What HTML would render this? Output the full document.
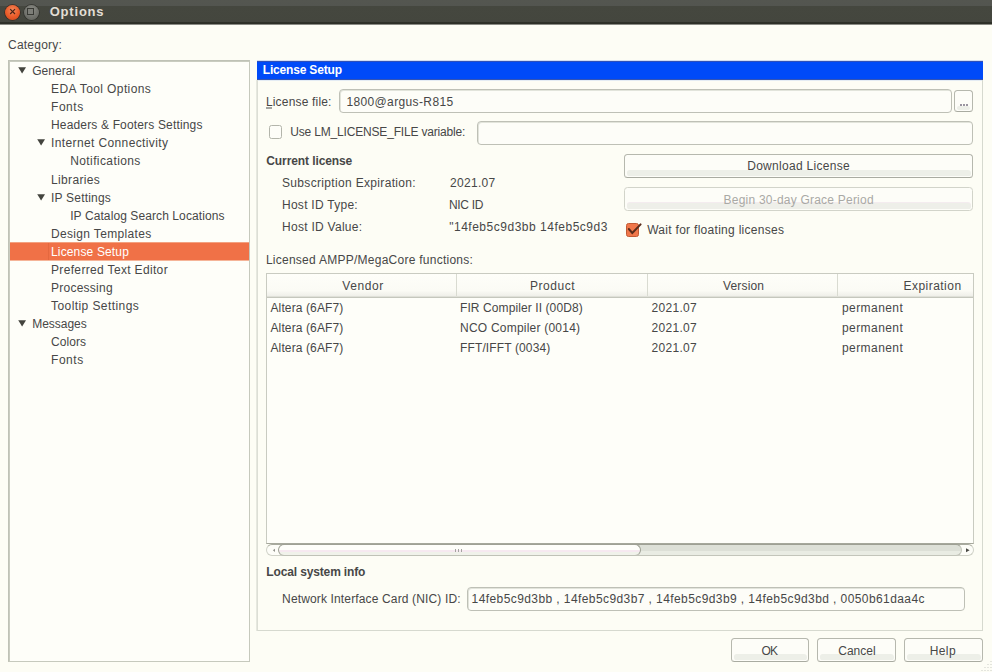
<!DOCTYPE html>
<html><head><meta charset="utf-8"><style>
*{box-sizing:border-box;margin:0;padding:0}
html,body{width:992px;height:672px;overflow:hidden;background:#fdfdf5}
body{position:relative;font-family:"Liberation Sans",sans-serif;font-size:12px;color:#474747}
.a{position:absolute}
.t{position:absolute;white-space:pre;line-height:14px;font-size:12px}
.input{position:absolute;border:1px solid #bec0b6;border-radius:4px;background:#fdfdf8;box-shadow:inset 1px 1px 0 #e2e4db}
.btn{position:absolute;border:1px solid #b6b8ae;border-bottom-color:#a9aba1;border-radius:3.5px;background:#fdfdf8}
.btn::after{content:'';position:absolute;left:2px;right:1px;bottom:1px;height:6px;border-radius:3px 4px 3px 3px;background:#edefe8}
.btn.dis{border-color:#d2d4ca}
.btn.dis::after{background:#eeefe9;box-shadow:0 -1px 0 #f4ecef}
.btn.sm::after{height:4px;left:2px;right:2px}
</style></head><body>
<div class="a" style="left:0;top:0;width:992px;height:24px;background:linear-gradient(#545650 0,#535550 6px,#45473f 6px,#44463e 22px,#2f3129 22px,#2d2f27 24px)"></div>
<div class="a" style="left:24px;top:24px;width:968px;height:1px;background:#8a8b84"></div>
<div class="a" style="left:0;top:24px;width:24px;height:1px;background:#8a8b84"></div>
<div class="a" style="left:5px;top:4.5px;width:15px;height:15px;border-radius:50%;background:radial-gradient(circle at 50% 35%,#f58a5c 0,#ea5a28 55%,#c8461c 100%);box-shadow:0 0 0 0.7px #3a2a22"></div>
<svg class="a" style="left:5px;top:4px" width="15" height="15"><path d="M5.2 5.2L10 10M10 5.2L5.2 10" stroke="#4a2418" stroke-width="1.2"/></svg>
<div class="a" style="left:23.5px;top:4.5px;width:15px;height:15px;border-radius:50%;background:radial-gradient(circle at 50% 35%,#8c8d87 0,#6f706a 60%,#5a5b55 100%);box-shadow:0 0 0 0.7px #30312c"></div>
<div class="a" style="left:27px;top:8px;width:7px;height:7px;border:1.3px solid #393a35;background:#7d7e78"></div>
<div class="t" style="left:49.70px;top:5px;letter-spacing:0.8px;font-weight:bold;font-size:13px;color:#e2ded5">Options</div>
<div class="t" style="left:8.00px;top:38px;letter-spacing:0.225px">Category:</div>
<div class="a" style="left:8px;top:60px;width:242px;height:602px;border:1px solid #c6c9bd;border-top-color:#bfc2b6;border-left-color:#bfc2b6;box-shadow:inset 1px 1px 0 #c9ccc0;background:#fefef9"></div>
<div class="a" style="left:10px;top:242px;width:239px;height:1px;background:#f3a180"></div>
<div class="a" style="left:10px;top:243px;width:239px;height:17px;background:#f07147"></div>
<div class="a" style="left:10px;top:260px;width:239px;height:1px;background:#f5b498"></div>
<div class="a" style="left:48px;top:243px;width:1px;height:17px;background:#e4683f"></div>
<div class="t" style="left:32.20px;top:64px;letter-spacing:0.033px">General</div>
<svg class="a" style="left:18px;top:67px" width="9" height="8"><path d="M0.2 0.3H8L4.1 6.6Z" fill="#43443e"/></svg>
<div class="t" style="left:51.00px;top:82px;letter-spacing:0.4px">EDA Tool Options</div>
<div class="t" style="left:51.00px;top:100px;letter-spacing:0.55px">Fonts</div>
<div class="t" style="left:51.00px;top:118px;letter-spacing:0.16px">Headers &amp; Footers Settings</div>
<div class="t" style="left:51.00px;top:136px;letter-spacing:0.38px">Internet Connectivity</div>
<svg class="a" style="left:37px;top:139px" width="9" height="8"><path d="M0.2 0.3H8L4.1 6.6Z" fill="#43443e"/></svg>
<div class="t" style="left:70.20px;top:154px;letter-spacing:0.4px">Notifications</div>
<div class="t" style="left:51.00px;top:173px;letter-spacing:0.35px">Libraries</div>
<div class="t" style="left:51.00px;top:191px;letter-spacing:0.2px">IP Settings</div>
<svg class="a" style="left:37px;top:194px" width="9" height="8"><path d="M0.2 0.3H8L4.1 6.6Z" fill="#43443e"/></svg>
<div class="t" style="left:70.20px;top:209px;letter-spacing:0.092px">IP Catalog Search Locations</div>
<div class="t" style="left:51.00px;top:227px;letter-spacing:0.333px">Design Templates</div>
<div class="t" style="left:51.00px;top:245px;letter-spacing:0.15px;color:#ffffff">License Setup</div>
<div class="t" style="left:51.00px;top:263px;letter-spacing:0.34px">Preferred Text Editor</div>
<div class="t" style="left:51.00px;top:281px;letter-spacing:0.244px">Processing</div>
<div class="t" style="left:51.00px;top:299px;letter-spacing:0.427px">Tooltip Settings</div>
<div class="t" style="left:32.20px;top:317px;letter-spacing:-0.029px">Messages</div>
<svg class="a" style="left:18px;top:320px" width="9" height="8"><path d="M0.2 0.3H8L4.1 6.6Z" fill="#43443e"/></svg>
<div class="t" style="left:51.00px;top:335px;letter-spacing:0.08px">Colors</div>
<div class="t" style="left:51.00px;top:353px;letter-spacing:0.55px">Fonts</div>
<div class="a" style="left:256px;top:80px;width:1px;height:551px;background:#e6e8df"></div>
<div class="a" style="left:257px;top:61px;width:726px;height:570px;border:1px solid #d6d9cf;border-left-color:#dcded5"></div>
<div class="a" style="left:257px;top:61px;width:726px;height:19px;background:#004af8"></div>
<div class="a" style="left:257px;top:61px;width:726px;height:1px;background:#3050b8"></div>
<div class="a" style="left:257px;top:79px;width:726px;height:1px;background:#3454b4"></div>
<div class="a" style="left:257px;top:60px;width:726px;height:1px;background:#d4dcf0"></div>
<div class="a" style="left:258px;top:80px;width:724px;height:1px;background:#e4ecf4"></div>
<div class="t" style="left:262.80px;top:63px;letter-spacing:-0.183px;font-weight:bold;color:#ffffff">License Setup</div>
<div class="t" style="left:265.90px;top:95px;letter-spacing:0.183px">License file:</div>
<div class="a" style="left:266px;top:107px;width:6px;height:2px;background:#a3a49e"></div>
<div class="input" style="left:339px;top:89px;width:613px;height:24px"></div>
<div class="t" style="left:346.40px;top:95px;letter-spacing:0.371px">1800@argus-R815</div>
<div class="btn sm" style="left:954px;top:90px;width:19px;height:22px"></div>
<div class="a" style="left:960px;top:104px;width:8px;height:2px;background:repeating-linear-gradient(90deg,#9a94a0 0,#9a94a0 2px,transparent 2px,transparent 3px)"></div>
<div class="a" style="left:269px;top:125px;width:13px;height:14px;border:1.5px solid #b3b5ab;border-radius:2.5px;background:#fdfdf8"></div>
<div class="t" style="left:290.30px;top:125px;letter-spacing:-0.179px">Use LM_LICENSE_FILE variable:</div>
<div class="input" style="left:477px;top:121px;width:496px;height:24px"></div>
<div class="t" style="left:266.30px;top:154px;letter-spacing:-0.1px;font-weight:bold">Current license</div>
<div class="t" style="left:282.00px;top:176px;letter-spacing:0.33px">Subscription Expiration:</div>
<div class="t" style="left:450.00px;top:176px;letter-spacing:0.3px">2021.07</div>
<div class="t" style="left:282.00px;top:198px;letter-spacing:0.267px">Host ID Type:</div>
<div class="t" style="left:449.00px;top:198px;letter-spacing:-0.32px">NIC ID</div>
<div class="t" style="left:282.00px;top:220px;letter-spacing:0.277px">Host ID Value:</div>
<div class="t" style="left:449.20px;top:220px;letter-spacing:0.513px">"14feb5c9d3bb 14feb5c9d3</div>
<div class="btn" style="left:624px;top:154px;width:349px;height:24px"></div>
<div class="t" style="left:747.20px;top:159px;letter-spacing:0.293px">Download License</div>
<div class="btn dis" style="left:624px;top:187px;width:349px;height:24px"></div>
<div class="t" style="left:723.60px;top:193px;letter-spacing:0.217px;color:#a9a9a5">Begin 30-day Grace Period</div>
<div class="a" style="left:626px;top:223px;width:13px;height:14px;border:1px solid #c25a34;border-radius:2.5px;background:#f0774a"></div>
<svg class="a" style="left:626px;top:222px" width="17" height="16"><path d="M2.8 7L6.3 11L14.6 2.4" stroke="#5a2c1b" stroke-width="2" fill="none" stroke-linecap="round"/></svg>
<div class="t" style="left:647.20px;top:223px;letter-spacing:0.288px">Wait for floating licenses</div>
<div class="t" style="left:265.90px;top:253px;letter-spacing:0.256px">Licensed AMPP/MegaCore functions:</div>
<div class="a" style="left:266px;top:273px;width:708px;height:271px;border:1px solid #c9cbc1;border-bottom-color:#a6a89c;background:#fefef9"></div>
<div class="a" style="left:267px;top:274px;width:706px;height:22px;background:linear-gradient(#fefef9 0,#fbfbf5 75%,#efefe9 100%)"></div>
<div class="a" style="left:267px;top:296px;width:706px;height:1px;background:#dfe0d8"></div>
<div class="a" style="left:267px;top:297px;width:706px;height:1px;background:#c5c7bd"></div>
<div class="a" style="left:456px;top:274px;width:1px;height:22px;background:#d9dbd1"></div>
<div class="a" style="left:647px;top:274px;width:1px;height:22px;background:#d9dbd1"></div>
<div class="a" style="left:837px;top:274px;width:1px;height:22px;background:#d9dbd1"></div>
<div class="t" style="left:342.30px;top:279px;letter-spacing:0.56px">Vendor</div>
<div class="t" style="left:530.00px;top:279px;letter-spacing:0.533px">Product</div>
<div class="t" style="left:723.00px;top:279px;letter-spacing:0.167px">Version</div>
<div class="t" style="left:903.50px;top:279px;letter-spacing:0.467px">Expiration</div>
<div class="t" style="left:270.50px;top:301px;letter-spacing:0.117px">Altera (6AF7)</div>
<div class="t" style="left:460.00px;top:301px;letter-spacing:0.095px">FIR Compiler II (00D8)</div>
<div class="t" style="left:651.50px;top:301px;letter-spacing:0.3px">2021.07</div>
<div class="t" style="left:842.00px;top:301px;letter-spacing:0.425px">permanent</div>
<div class="t" style="left:270.50px;top:321px;letter-spacing:0.117px">Altera (6AF7)</div>
<div class="t" style="left:460.00px;top:321px;letter-spacing:0.222px">NCO Compiler (0014)</div>
<div class="t" style="left:651.50px;top:321px;letter-spacing:0.3px">2021.07</div>
<div class="t" style="left:842.00px;top:321px;letter-spacing:0.425px">permanent</div>
<div class="t" style="left:270.50px;top:341px;letter-spacing:0.117px">Altera (6AF7)</div>
<div class="t" style="left:460.00px;top:341px;letter-spacing:0.129px">FFT/IFFT (0034)</div>
<div class="t" style="left:651.50px;top:341px;letter-spacing:0.3px">2021.07</div>
<div class="t" style="left:842.00px;top:341px;letter-spacing:0.425px">permanent</div>
<div class="a" style="left:266px;top:544px;width:708px;height:12px;border:1px solid #d0d2c8;border-top-color:#a8aa9e;border-radius:6px;background:#fdfdf8"></div>
<div class="a" style="left:279px;top:544px;width:683px;height:12px;border:1px solid #c3c5ba;border-top-color:#9ea094;border-radius:6px;background:linear-gradient(#dde0d7 0,#dde0d7 55%,#e9ece3 62%,#e9ece3 100%)"></div>
<div class="a" style="left:278px;top:544px;width:363px;height:12px;border:1px solid #9fa195;border-bottom-color:#c0c2b7;border-radius:6px;background:linear-gradient(#fefefa 0,#fefefa 45%,#f6e9f0 52%,#f6e9f0 66%,#f0f2ea 72%,#f0f2ea 100%)"></div>
<div class="a" style="left:455px;top:549px;width:8px;height:3px;background:repeating-linear-gradient(90deg,#a4a4a0 0,#a4a4a0 1.4px,transparent 1.4px,transparent 3px)"></div>
<svg class="a" style="left:266px;top:544px" width="14" height="13"><path d="M6.8 6.3L9 4.8V7.9Z" fill="#94948e"/></svg>
<svg class="a" style="left:960px;top:544px" width="14" height="13"><path d="M6 4.2L9.6 6.25L6 8.3Z" fill="#4a4a45"/></svg>
<div class="t" style="left:266.30px;top:565px;letter-spacing:-0.138px;font-weight:bold">Local system info</div>
<div class="t" style="left:282.10px;top:592px;letter-spacing:0.142px">Network Interface Card (NIC) ID:</div>
<div class="input" style="left:467px;top:587px;width:498px;height:24px"></div>
<div class="t" style="left:471.60px;top:592px;letter-spacing:0.411px">14feb5c9d3bb , 14feb5c9d3b7 , 14feb5c9d3b9 , 14feb5c9d3bd , 0050b61daa4c</div>
<div class="btn" style="left:731px;top:638px;width:78px;height:24px"></div>
<div class="t" style="left:761.50px;top:644px;letter-spacing:-0.8px">OK</div>
<div class="btn" style="left:817px;top:638px;width:79px;height:24px"></div>
<div class="t" style="left:838.20px;top:644px;letter-spacing:0.04px">Cancel</div>
<div class="btn" style="left:904px;top:638px;width:79px;height:24px"></div>
<div class="t" style="left:929.70px;top:644px;letter-spacing:0.4px">Help</div>
<div class="a" style="left:990px;top:661px;width:2px;height:1px;background:#e4e5de"></div>
<div class="a" style="left:987px;top:664px;width:2px;height:1px;background:#e4e5de"></div>
<div class="a" style="left:990px;top:664px;width:2px;height:1px;background:#e4e5de"></div>
<div class="a" style="left:984px;top:667px;width:2px;height:1px;background:#e4e5de"></div>
<div class="a" style="left:987px;top:667px;width:2px;height:1px;background:#e4e5de"></div>
<div class="a" style="left:990px;top:667px;width:2px;height:1px;background:#e4e5de"></div>
<div class="a" style="left:981px;top:670px;width:2px;height:1px;background:#e4e5de"></div>
<div class="a" style="left:984px;top:670px;width:2px;height:1px;background:#e4e5de"></div>
<div class="a" style="left:987px;top:670px;width:2px;height:1px;background:#e4e5de"></div>
<div class="a" style="left:990px;top:670px;width:2px;height:1px;background:#e4e5de"></div>
</body></html>
